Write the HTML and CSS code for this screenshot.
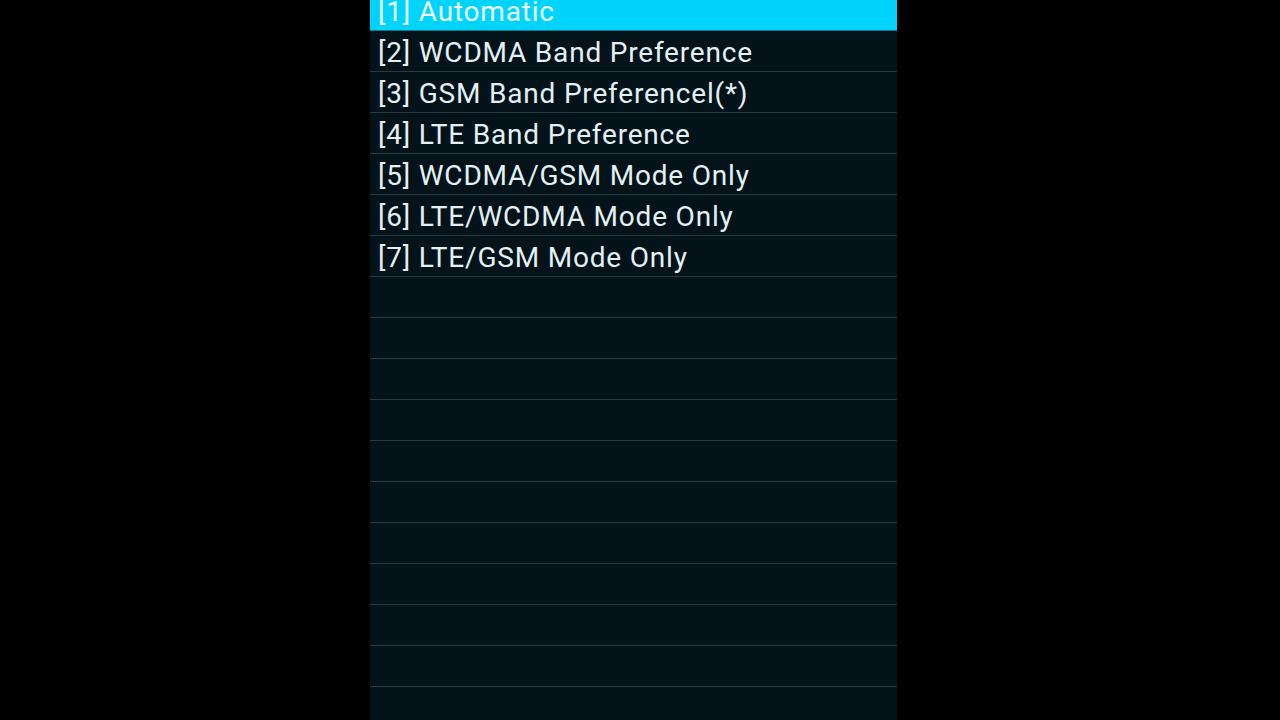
FILE: index.html
```html
<!DOCTYPE html>
<html lang="en">
<head>
    <meta charset="UTF-8">
    <title>Band Selection</title>
    <link rel="stylesheet" href="styles.css">
</head>
<body>
    <div class="panel">
        <div class="row selected">[1] Automatic</div>
        <div class="row">[2] WCDMA Band Preference</div>
        <div class="row">[3] GSM Band Preferencel(*)</div>
        <div class="row">[4] LTE Band Preference</div>
        <div class="row">[5] WCDMA/GSM Mode Only</div>
        <div class="row">[6] LTE/WCDMA Mode Only</div>
        <div class="row">[7] LTE/GSM Mode Only</div>
        <div class="row"></div>
        <div class="row"></div>
        <div class="row"></div>
        <div class="row"></div>
        <div class="row"></div>
        <div class="row"></div>
        <div class="row"></div>
        <div class="row"></div>
        <div class="row"></div>
        <div class="row"></div>
        <div class="row"></div>
    </div>
</body>
</html>
```

FILE: styles.css
```css
* { margin: 0; padding: 0; box-sizing: border-box; }
html, body { height: 100%; }
body {
    background: #000;
    overflow: hidden;
    font-family: Roboto, "Noto Sans", sans-serif;
}
.panel {
    width: 527px;
    height: 740px;
    margin: -10px 0 0 370px;
    background: #04121a;
    overflow: hidden;
}
.row {
    height: 41px;
    padding: 2px 0 0 8px;
    line-height: 39px;
    font-size: 28px;
    letter-spacing: 0.8px;
    color: #e2f1f4;
    border-bottom: 1px solid #2b3b44;
    white-space: nowrap;
}
.row.selected {
    background: #00d4fc;
    color: #eafbff;
    border-bottom-color: #0a7d95;
}
```
